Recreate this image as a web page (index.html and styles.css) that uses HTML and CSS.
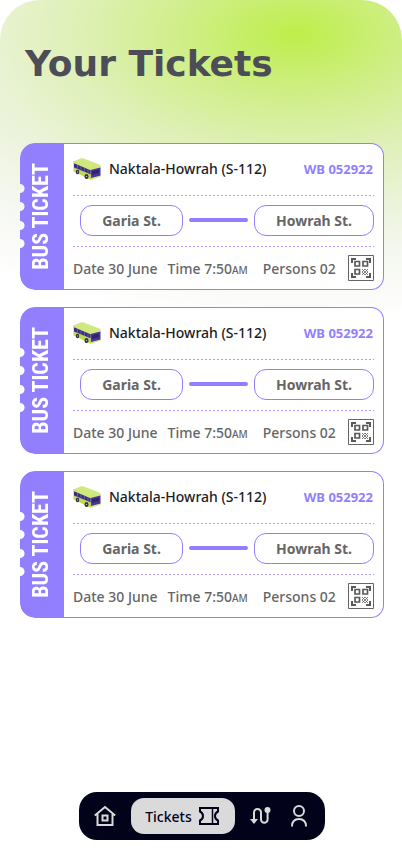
FILE: index.html
```html
<!DOCTYPE html>
<html lang="en">
<head>
<meta charset="utf-8">
<meta name="viewport" content="width=device-width, initial-scale=1">
<title>Your Tickets</title>
<link rel="stylesheet" href="styles.css">
</head>
<body>
<svg class="sprite" aria-hidden="true">
  <symbol id="bus" viewBox="0 0 28 22">
    <path d="M14 20l4 1.800 9.500-3v-3z" fill="#cbe96c"/>
    <path d="M.5 3l17 7 .5 11.500L13 19.500.5 13.500z" fill="#bcd957"/>
    <path d="M.5 3.500L8 .3Q9 0 10 .3L27.500 7v3l-10 2.500L.5 5.500z" fill="#cfe97e"/>
    <path d="M1 5.300l16.500 7v4L1 9.500z" fill="#3d2b86"/>
    <path d="M17.500 12l10-2.500V17.500L18 20z" fill="#4a35a0"/>
    <path d="M19 13.200l7-1.800v3.600l-7 2z" fill="#33236f"/>
    <path d="M4.500 6.800v4M8 8.300v4M11.500 9.800v4M15 11.300v4" stroke="#8f97a0" stroke-width=".5"/>
    <ellipse cx="4.500" cy="14" rx="1.700" ry="2.300" fill="#2c2a3c"/>
    <ellipse cx="13.500" cy="18.500" rx="2" ry="2.500" fill="#2c2a3c"/>
    <circle cx="4.500" cy="14" r=".7" fill="#b8b8c4"/>
    <circle cx="13.500" cy="18.500" r=".8" fill="#b8b8c4"/>
  </symbol>
  <symbol id="qr" viewBox="0 0 26 26">
    <path d="M.5.500h25v25H.5z" fill="#fff" stroke="#666"/>
    <g fill="none" stroke="#5a5a5a">
      <path d="M4 8V4h4M18 4h4v4M4 18v4h4M18 22h4v-4" stroke-width="2"/>
      <path d="M7 6.500h4.500v4.500H7zM15 6.500h4.500v4.500H15zM7 14.500h4.500v4.500H7z" stroke-width="1.700"/>
      <path d="M14 14l6 6M17 14l3 3M14 17l3 3M20 14l-6 6M17 14l-3 3M20 17l-3 3" stroke-width=".8"/>
    </g>
  </symbol>
</svg>
<div class="screen">
  <h1 class="title">Your Tickets</h1>
  <main class="tickets">
    <article class="ticket">
      <div class="stub"><span class="stub-label">BUS TICKET</span></div>
      <div class="body">
        <div class="route">
          <svg class="bus"><use href="#bus"/></svg>
          <h2 class="name">Naktala-Howrah (S-112)</h2>
          <span class="plate">WB 052922</span>
        </div>
        <div class="stops">
          <span class="stop">Garia St.</span><span class="line"></span><span class="stop stop-to">Howrah St.</span>
        </div>
        <div class="details">
          <span class="date">Date 30 June</span><span class="time">Time 7:50<small>AM</small></span><span>Persons 02</span>
          <svg class="qr"><use href="#qr"/></svg>
        </div>
      </div>
    </article>
    <article class="ticket">
      <div class="stub"><span class="stub-label">BUS TICKET</span></div>
      <div class="body">
        <div class="route">
          <svg class="bus"><use href="#bus"/></svg>
          <h2 class="name">Naktala-Howrah (S-112)</h2>
          <span class="plate">WB 052922</span>
        </div>
        <div class="stops">
          <span class="stop">Garia St.</span><span class="line"></span><span class="stop stop-to">Howrah St.</span>
        </div>
        <div class="details">
          <span class="date">Date 30 June</span><span class="time">Time 7:50<small>AM</small></span><span>Persons 02</span>
          <svg class="qr"><use href="#qr"/></svg>
        </div>
      </div>
    </article>
    <article class="ticket">
      <div class="stub"><span class="stub-label">BUS TICKET</span></div>
      <div class="body">
        <div class="route">
          <svg class="bus"><use href="#bus"/></svg>
          <h2 class="name">Naktala-Howrah (S-112)</h2>
          <span class="plate">WB 052922</span>
        </div>
        <div class="stops">
          <span class="stop">Garia St.</span><span class="line"></span><span class="stop stop-to">Howrah St.</span>
        </div>
        <div class="details">
          <span class="date">Date 30 June</span><span class="time">Time 7:50<small>AM</small></span><span>Persons 02</span>
          <svg class="qr"><use href="#qr"/></svg>
        </div>
      </div>
    </article>
  </main>
  <nav class="nav" aria-label="Main">
    <a class="nav-link" href="#home" aria-label="Home">
      <svg width="22" height="22" viewBox="0 0 22 22" fill="none" stroke="#dadada" stroke-width="2"><path d="M.8 10.500L11 2l10.200 8.500M3.500 9v11h15V9"/><path d="M8.500 10.500h5v5h-5z"/></svg>
    </a>
    <a class="nav-link active" href="#tickets" aria-current="page">Tickets
      <svg width="22" height="20" viewBox="0 0 22 20" fill="none" stroke="#02021a" stroke-width="2"><path d="M2 2h18v3.500q-3 1.500-3 4.500t3 4.500V18H2v-3.500q3-1.500 3-4.500T2 5.500z"/><path d="M14.500 2v16" stroke-width="1.500"/></svg>
    </a>
    <a class="nav-link" href="#routes" aria-label="Routes">
      <svg width="22" height="20" viewBox="0 0 22 20" fill="none" stroke="#dadada" stroke-width="2"><path d="M4 14V6.500a3.500 3.500 0 0 1 7 0v7a3.300 3.300 0 0 0 6.600 0V4"/><circle cx="17.500" cy="4" r="3" fill="#dadada" stroke="none"/><path d="M0 13h8l-4 5z" fill="#dadada" stroke="none"/></svg>
    </a>
    <a class="nav-link profile" href="#profile" aria-label="Profile">
      <svg width="18" height="22" viewBox="0 0 18 22" fill="none" stroke="#dadada" stroke-width="2"><circle cx="9" cy="6" r="5"/><path d="M2 21.500c0-5 3-7.500 7-7.500s7 2.500 7 7.500"/></svg>
    </a>
  </nav>
</div>
</body>
</html>
```
FILE: styles.css
```css
* { box-sizing: border-box; }

body {
  margin: 0;
  background: #fff;
  font-family: "Noto Sans", sans-serif;
}

.sprite {
  position: absolute;
  width: 0;
  height: 0;
}

.screen {
  display: flex;
  flex-direction: column;
  min-height: 100vh;
  padding: 43px 18px 17px 20px;
  border-radius: 40px 40px 0 0;
  background: radial-gradient(ellipse 540px 290px at 296px 34px, rgb(190 238 74) 0%, rgb(207 238 133) 20%, rgb(222 240 181) 40%, rgb(235 243 217) 60%, rgb(246 248 242) 80%, #fff 100%) #fff;
}

.title {
  margin: 0 0 58px 5px;
  font: bold 36px/42px "DejaVu Sans", sans-serif;
  color: #4d4d57;
}

.tickets {
  display: flex;
  flex-direction: column;
  gap: 17px;
}

.ticket { display: flex; }

.stub {
  display: grid;
  place-items: center;
  width: 44px;
  border-radius: 15px 0 0 15px;
  background: #917fff;
  mask:
    radial-gradient(circle at 0 calc(50% - 28px), #0000 4px, #000 5px),
    radial-gradient(circle at 0 calc(50% - 10px), #0000 4px, #000 5px),
    radial-gradient(circle at 0 calc(50% + 9px), #0000 4px, #000 5px),
    radial-gradient(circle at 0 calc(50% + 27px), #0000 4px, #000 5px);
  mask-composite: intersect;
}

.stub-label {
  padding-left: 2px;
  writing-mode: vertical-rl;
  transform: rotate(180deg);
  font: bold 22px/24px "Roboto Condensed", Roboto, "Liberation Sans", sans-serif;
  color: #fff;
  white-space: nowrap;
}

.body {
  flex: 1;
  min-width: 0;
  padding: 0 9px;
  border: 1px solid #917fff;
  border-left: 0;
  border-radius: 0 13px 13px 0;
  background: #fff;
}

.route, .stops, .details {
  display: flex;
  align-items: center;
  height: 51px;
  white-space: nowrap;
}

.route { padding: 0 1px 2px 0; }

.stops {
  gap: 6px;
  height: 52px;
  padding: 0 0 2px 7px;
  background:
    repeating-linear-gradient(90deg, #a99bff 0 2px, transparent 2px 4px) 0 0 / 100% 1px no-repeat,
    repeating-linear-gradient(90deg, #a99bff 0 2px, transparent 2px 4px) 0 100% / 100% 1px no-repeat;
}

.details {
  height: 42px;
  font-size: 14px;
  font-weight: 500;
  color: #666;
}

.bus {
  width: 28px;
  height: 22px;
  margin-right: 8px;
}

.name {
  margin: 0;
  font-size: 14px;
  font-weight: 500;
  color: #1c1c24;
}

.plate {
  margin-left: auto;
  font-size: 13px;
  font-weight: 700;
  color: #917fff;
}

.stop {
  width: 103px;
  height: 31px;
  border: 1px solid #917fff;
  border-radius: 12px;
  font-size: 14px;
  font-weight: 700;
  line-height: 29px;
  text-align: center;
  color: #666;
}

.stop-to { width: 120px; }

.line {
  flex: 1;
  height: 4px;
  border-radius: 2px;
  background: #917fff;
}

.date { margin-right: 10px; }
.time { margin-right: 15px; }
small { font-size: 10px; }

.qr {
  width: 26px;
  height: 26px;
  margin-left: auto;
}

.nav {
  display: flex;
  align-items: center;
  align-self: center;
  gap: 15px;
  height: 48px;
  margin-top: auto;
  padding: 0 17px 0 15px;
  border-radius: 18px;
  background: #02021a;
}

.nav-link { display: flex; }

.profile { margin-left: 3px; }

.active {
  align-items: center;
  gap: 6px;
  height: 36px;
  padding: 0 15px 0 14px;
  border-radius: 13px;
  background: #dadada;
  color: #02021a;
  font-size: 14px;
  font-weight: 500;
  text-decoration: none;
}
```
